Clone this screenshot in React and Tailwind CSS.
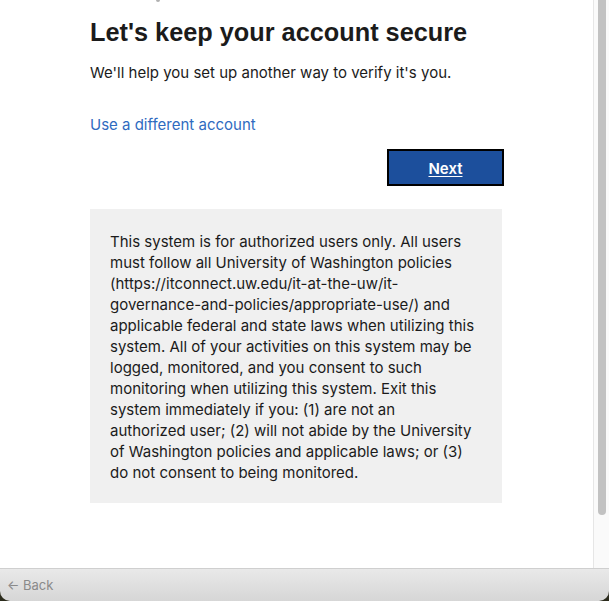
const lines = [
  "This system is for authorized users only. All users",
  "must follow all University of Washington policies",
  "(https://itconnect.uw.edu/it-at-the-uw/it-",
  "governance-and-policies/appropriate-use/) and",
  "applicable federal and state laws when utilizing this",
  "system. All of your activities on this system may be",
  "logged, monitored, and you consent to such",
  "monitoring when utilizing this system. Exit this",
  "system immediately if you: (1) are not an",
  "authorized user; (2) will not abide by the University",
  "of Washington policies and applicable laws; or (3)",
  "do not consent to being monitored.",
];

export default function App() {
  const font = { fontFamily: 'Inter, "Liberation Sans", Arial, sans-serif' };
  const head = { fontFamily: '"Liberation Sans", Arial, sans-serif' };
  return (
    <div className="w-[609px] h-[601px] bg-[#2b2b1c] overflow-hidden" style={font}>
      <div className="flex flex-col h-full">
        <div className="flex flex-1 bg-white min-h-0">
          <div className="flex-1 min-w-0 relative">
            <div className="absolute left-[156px] top-[-3px] w-[4px] h-[5px] rounded-full bg-[#b0b0b0]" />
            <div className="pl-[90px] pr-[91px] pt-[17px]">
              <h1 className="text-[25.3px] leading-[30px] font-bold text-[#1b1b1b]" style={head}>
                Let's keep your account secure
              </h1>
              <p className="mt-[16px] text-[15px] leading-[20px] text-[#1b1b1b]">
                We'll help you set up another way to verify it's you.
              </p>
              <div className="mt-[32px] text-[15px] leading-[20px] text-[#2f6bbf]">
                Use a different account
              </div>
              <div className="flex justify-end mt-[14px]">
                <button className="w-[117px] h-[37px] mr-[-2px] pt-[3px] border-2 border-black bg-[#1c4f9c] text-white text-[15px] font-semibold underline underline-offset-2">
                  Next
                </button>
              </div>
              <div className="mt-[23px] bg-[#f0f0f0] px-[20px] pt-[22px] pb-[20px] text-[15px] leading-[21px] text-[#1b1b1b]">
                {lines.map((l) => (
                  <div key={l} className="whitespace-nowrap">{l}</div>
                ))}
              </div>
            </div>
          </div>
          <div className="w-[16px] bg-[#fafafa] border-l border-[#e6e6e6] flex justify-center">
            <div className="w-[8px] h-[515px] rounded-b-full bg-[#c2c2c2] ml-[1px]" />
          </div>
        </div>
        <div className="h-[33px] border-t border-[#cfcfcf] bg-gradient-to-b from-[#e9e9e9] to-[#d6d6d6] rounded-b-[10px] flex items-center pl-[7px] pt-[2px] text-[13px] text-[#8a8a8a]">
          ← Back
        </div>
      </div>
    </div>
  );
}
